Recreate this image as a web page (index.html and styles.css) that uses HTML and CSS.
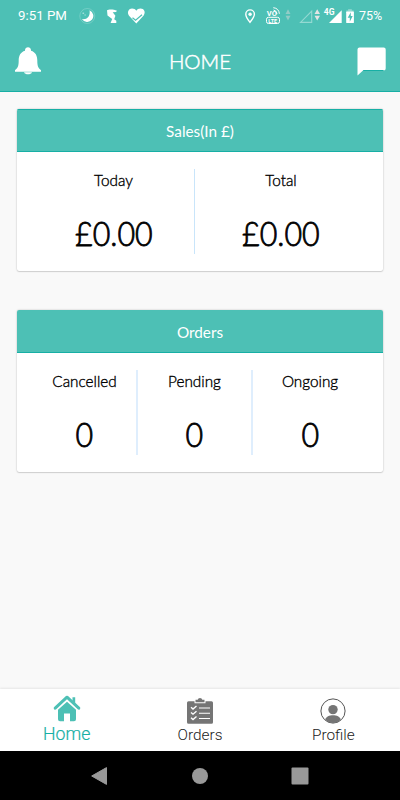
FILE: index.html
```html
<!DOCTYPE html>
<html lang="en">
<head>
  <meta charset="UTF-8">
  <meta name="viewport" content="width=device-width, initial-scale=1">
  <title>Home</title>
  <link rel="stylesheet" href="styles.css">
</head>
<body>
  <header class="header">
    <div class="status-bar">
      <span class="clock">9:51 PM</span>
      <svg class="status-left" width="72" height="20" viewBox="77 5 72 20">
        <circle cx="87.3" cy="15" r="7.5" fill="none" stroke="#fff" stroke-opacity=".3" stroke-width=".7"/>
        <path d="M89.5 9.2A6.1 6.1 0 1 1 82 18C87.5 19 90.5 14.5 89.5 9.2Z" fill="#fff"/>
        <path d="M82.5 12.2h1.6M84.6 14h1" stroke="#fff" stroke-opacity=".7"/>
        <path d="M107 9.3C109 8 114 8.5 117 9.7L116 11 112.7 11.2 115.4 14.8 114.2 18.3 116.3 19.8V22H110.6L112.2 18 107.5 14.5Z" fill="#fff"/>
        <path d="M136.3 22.4 129 14.7C126.5 11 129 7.6 132 7.6 134 7.6 135.5 8.5 136.3 9.7 137.3 8.5 138.5 7.6 140.5 7.6 144 7.6 146 11 143.7 14.4Z" fill="#fff"/>
        <path d="M132.5 16.7 135.6 19.3 142 13.8" fill="none" stroke="#4dc0b5" stroke-width="1.2"/>
      </svg>
      <svg class="status-right" width="112" height="20" viewBox="243 5 112 20">
        <path d="M250 21.3C247.5 18.2 245.8 15.5 245.8 13.2A4.3 4.3 0 0 1 254.4 13.2C254.4 15.5 252.5 18.2 250 21.3Z" fill="none" stroke="#fff" stroke-width="1.4"/>
        <circle cx="250.1" cy="13.2" r="1.7" fill="#fff"/>
        <text class="volte" x="266.8" y="15.2">VO</text>
        <path d="M273.5 9Q276.5 9.5 277 13M273.3 6.7Q278.8 7.2 279.4 12.8" fill="none" stroke="#fff"/>
        <rect x="266.5" y="16.3" width="13" height="6.2" rx="2" fill="none" stroke="#fff"/>
        <text class="lte" x="268.3" y="21.5">LTE</text>
        <path d="M285.5 13 288 8.3 290.5 13ZM285.5 14.7H290.5L288 19.5Z" fill="#d8d8d8" opacity=".5"/>
        <path d="M300.5 21.4H311.7V10Z" fill="none" stroke="#fff" stroke-opacity=".4" stroke-width="1.1"/>
        <path d="M314.5 13 317.2 8.3 320 13ZM314.5 14.7H320L317.2 19.5Z" fill="#e4e4e4"/>
        <path d="M329 22H341.7V9.3Z" fill="#fff"/>
        <text class="network" x="323.8" y="14.2">4G</text>
        <path d="M346.2 10.7V9.5H348.1V8.2H351.8V9.5H353.7V10.7Z" fill="#fff" opacity=".4"/>
        <rect x="346.2" y="10.6" width="7.7" height="11.5" rx=".7" fill="#fff"/>
        <path d="M350.8 11.2 347.7 16.7H349.8V20.8L352.7 15H350.8Z" fill="#4dc0b5"/>
      </svg>
      <span class="battery">75%</span>
    </div>
    <div class="app-bar">
      <svg width="28" height="30" viewBox="0 0 28 30">
        <path d="M11 4.2C11 .2 17 .2 17 4.2V4.7C21.5 6 23.3 9.8 23.3 14.5 23.3 19.5 24 22 27 24.2V25.7H1V24.2C4 22 4.7 19.5 4.7 14.5 4.7 9.8 6.5 6 11 4.7Z" fill="#fff"/>
        <path d="M10 26.3H18C17 29 11 29 10 26.3Z" fill="#fff"/>
      </svg>
      <h1>HOME</h1>
      <svg width="30" height="30" viewBox="0 0 30 30">
        <path d="M2.5 1.5H26.7A2 2 0 0 1 28.7 3.5V22.5A2 2 0 0 1 26.7 24.5H6L.5 29.5V3.5A2 2 0 0 1 2.5 1.5Z" fill="#fff"/>
        <path d="M6.2 24.5H26.5" stroke="#17afa5"/>
      </svg>
    </div>
  </header>

  <main class="content">
    <section class="card">
      <h2>Sales(In £)</h2>
      <div class="stats sales">
        <div class="stat">
          <span class="label">Today</span>
          <span class="value">£0.00</span>
        </div>
        <div class="stat">
          <span class="label">Total</span>
          <span class="value">£0.00</span>
        </div>
      </div>
    </section>

    <section class="card">
      <h2>Orders</h2>
      <div class="stats orders">
        <div class="stat">
          <span class="label">Cancelled</span>
          <span class="value">0</span>
        </div>
        <div class="stat">
          <span class="label">Pending</span>
          <span class="value">0</span>
        </div>
        <div class="stat">
          <span class="label">Ongoing</span>
          <span class="value">0</span>
        </div>
      </div>
    </section>
  </main>

  <nav class="tabs">
    <a class="tab active">
      <svg width="28" height="28" viewBox="0 0 28 28">
        <path d="M2.2 14.2 14 3.2 25.8 14.2" fill="none" stroke="#4dc0b5" stroke-width="3" stroke-linecap="round" stroke-linejoin="round"/>
        <path d="M19.5 3.3H22.2V9.5L19.5 7Z" fill="#4dc0b5"/>
        <path d="M14 7.8 23 15.8V25.2Q23 27.2 21 27.2H17V19.5H11V27.2H7Q5 27.2 5 25.2V15.8Z" fill="#4dc0b5"/>
      </svg>
      <span>Home</span>
    </a>
    <a class="tab">
      <svg width="28" height="28" viewBox="0 0 28 28">
        <path d="M2.5 3.2H8.5V5.2H19.5V3.2H25.5Q27 3.2 27 4.7V24.2Q27 25.7 25.5 25.7H2.5Q1 25.7 1 24.2V4.7Q1 3.2 2.5 3.2Z" fill="#757575"/>
        <path d="M9.5 4.2V1.7H11.7Q12 0 14 0T16.3 1.7H18.5V4.2Z" fill="#757575"/>
        <path d="M5 9.3 7 11 10.5 8M5 14.5 7 16.2 10.5 13.2M5 19.8 7 21.5 10.5 18.5" fill="none" stroke="#fff" stroke-width="1.4"/>
        <path d="M13 10H24M13 15.2H24M13 20.5H24" stroke="#fff" stroke-width="1.1"/>
      </svg>
      <span>Orders</span>
    </a>
    <a class="tab">
      <svg width="28" height="28" viewBox="0 0 28 28">
        <circle cx="14" cy="13" r="12.1" fill="none" stroke="#555"/>
        <circle cx="14" cy="11.6" r="4.7" fill="#757575"/>
        <path d="M6.2 21.5C7.5 15.8 20.5 15.8 21.8 21.5 18 26.2 10 26.2 6.2 21.5Z" fill="#757575"/>
      </svg>
      <span>Profile</span>
    </a>
  </nav>

  <div class="system-nav">
    <svg width="18" height="20" viewBox="0 0 18 20"><path d="M15.5 1.6V18.4L.7 10Z" fill="#999" stroke="#999" stroke-linejoin="round"/></svg>
    <svg width="18" height="20" viewBox="0 0 18 20"><circle cx="9" cy="10" r="8" fill="#999"/></svg>
    <svg width="18" height="20" viewBox="0 0 18 20"><rect x=".5" y="1.5" width="17" height="17" rx="1" fill="#999"/></svg>
  </div>
</body>
</html>
```
FILE: styles.css
```css
* {
  box-sizing: border-box;
}

body {
  margin: 0;
  height: 800px;
  display: flex;
  flex-direction: column;
  overflow: hidden;
  background-color: #f9f9f9;
  font-family: Lato, sans-serif;
  color: #000;
}

svg {
  display: block;
  flex: none;
}

.header {
  height: 92px;
  background-color: #4dc0b5;
  border-bottom: 1px solid #17afa5;
  color: #fff;
}

.status-bar {
  display: flex;
  align-items: center;
  height: 31px;
  padding-left: 18px;
  font-family: Roboto, sans-serif;
  font-size: 13.3px;
  white-space: nowrap;
}

.clock {
  width: 59px;
}

.status-right {
  margin-left: 94px;
}

.battery {
  margin-left: 4px;
  font-size: 12.5px;
}

.volte,
.lte,
.network {
  fill: #fff;
  font-weight: 700;
}

.volte {
  font-size: 7.5px;
}

.lte {
  font-size: 5.5px;
}

.network {
  font-size: 8.5px;
}

.app-bar {
  display: flex;
  align-items: center;
  justify-content: space-between;
  height: 60px;
  padding: 0 13px 0 14px;
}

.app-bar h1 {
  margin: 0;
  padding-left: 1px;
  font-size: 20.5px;
  font-weight: 300;
  -webkit-text-stroke: 0.5px;
}

.content {
  flex: 1;
  padding: 17px 17px 0;
}

.card {
  height: 162px;
  margin-bottom: 39px;
  background-color: #fff;
  border-radius: 2px;
  box-shadow: 0 0 2px rgba(0, 0, 0, 0.25), 0 1px 1px rgba(0, 0, 0, 0.1);
  overflow: hidden;
}

.card h2 {
  margin: 0;
  height: 43px;
  line-height: 44px;
  text-align: center;
  font-size: 15.3px;
  font-weight: 400;
  color: #fff;
  background-color: #4dc0b5;
  box-shadow: inset 0 -1px #17afa5;
}

.card:first-child h2 {
  box-shadow: inset 0 1px #17afa5, inset 0 -1px #17afa5;
}

.stats {
  display: grid;
  padding: 17px 16px;
}

.sales {
  grid-template-columns: 162px 172px;
}

.orders {
  grid-template-columns: 105px 115px 114px;
}

.stat {
  display: flex;
  flex-direction: column;
  align-items: center;
  height: 85px;
}

.stat:not(:last-child) {
  border-right: 1px solid #c9e5fa;
}

.orders .stat:not(:last-child) {
  border-right: 2px solid #dfeefd;
}

.label {
  font-size: 15.3px;
  font-weight: 300;
  line-height: 22px;
  -webkit-text-stroke: 0.35px;
}

.value {
  margin-top: 22px;
  font-size: 32px;
  font-weight: 300;
  line-height: 42px;
  -webkit-text-stroke: 0.8px;
  transform: scale(0.95, 1.02);
}

.tabs {
  display: flex;
  height: 62px;
  background-color: #fff;
  box-shadow: 0 -1px 2px rgba(0, 0, 0, 0.08);
  font-family: Roboto, sans-serif;
}

.tab {
  flex: 1;
  display: flex;
  flex-direction: column;
  align-items: center;
  padding-top: 9px;
  font-size: 15.4px;
  font-weight: 300;
  line-height: 18px;
  color: #222;
}

.tab.active {
  padding-top: 5px;
  font-size: 17.7px;
  line-height: 24px;
  color: #17afa5;
  -webkit-text-stroke: 0.2px;
}

.system-nav {
  display: flex;
  align-items: center;
  justify-content: center;
  gap: 82px;
  height: 49px;
  background-color: #000;
}
```
